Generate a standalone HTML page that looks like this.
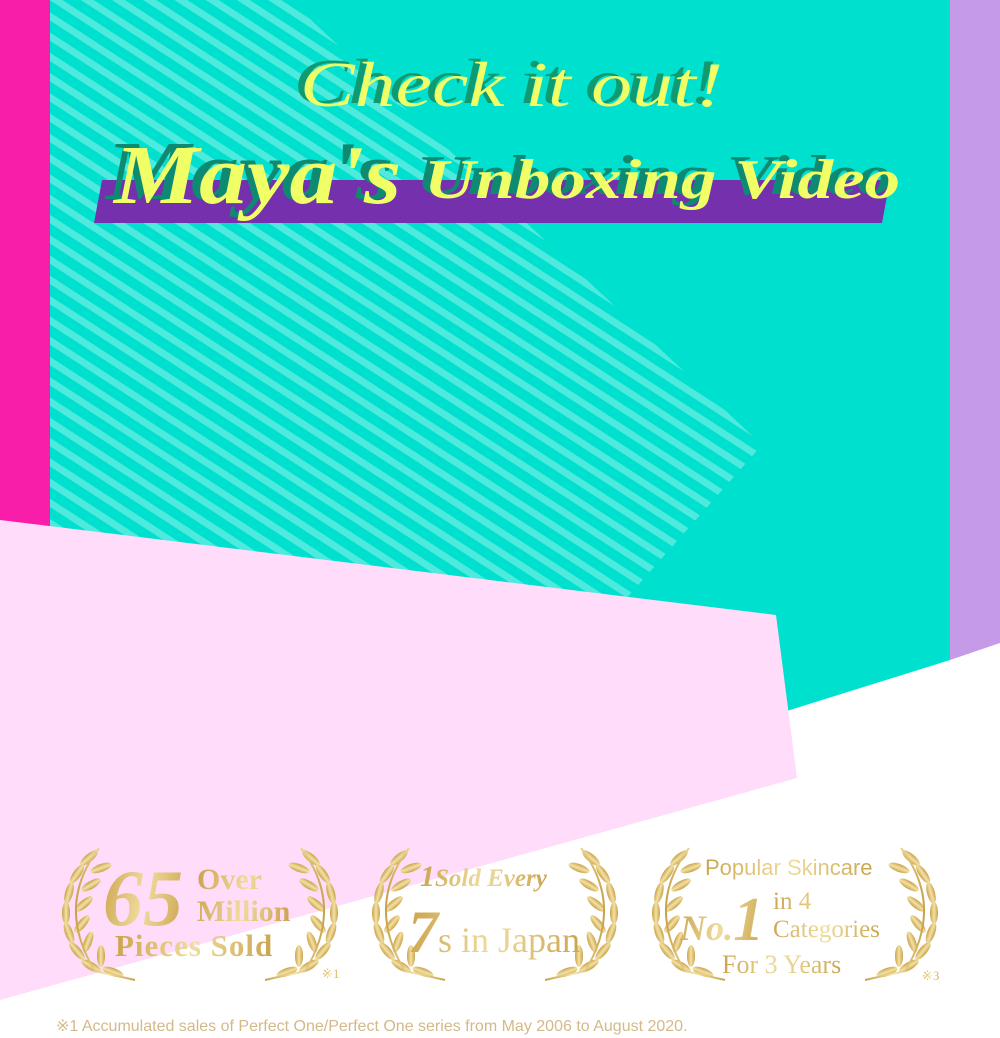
<!DOCTYPE html>
<html><head><meta charset="utf-8"><style>
body{margin:0;width:1000px;height:1038px;position:relative;overflow:hidden;background:#fff;font-family:"Liberation Serif",serif}
.a{position:absolute}
.gold{background:linear-gradient(100deg,#c9a24a,#f0dc9e 50%,#c9a24a);-webkit-background-clip:text;background-clip:text;color:transparent}
.t{position:absolute;font-style:italic;color:#f0ff66;white-space:nowrap;transform-origin:0 0}
</style></head><body>
<svg class="a" style="left:0;top:0" width="1000" height="1038">
<defs>
<pattern id="st" patternUnits="userSpaceOnUse" width="17" height="17" patternTransform="rotate(33)">
<rect width="17" height="17" fill="#00e0ce"/><rect width="17" height="7" fill="#4deadd"/></pattern>
<linearGradient id="g" x1="0" x2="1"><stop offset="0" stop-color="#c9a24a"/><stop offset=".5" stop-color="#f3e1a4"/><stop offset="1" stop-color="#c9a24a"/></linearGradient>
<g id="lf"><g fill="url(#g)">
<ellipse cx="0" cy="0" rx="4" ry="11" transform="translate(34,12) rotate(50)"/>
<ellipse cx="0" cy="0" rx="4" ry="11" transform="translate(22,28) rotate(35)"/>
<ellipse cx="0" cy="0" rx="4" ry="11" transform="translate(14,47) rotate(15)"/>
<ellipse cx="0" cy="0" rx="4" ry="11" transform="translate(11,67) rotate(0)"/>
<ellipse cx="0" cy="0" rx="4" ry="11" transform="translate(14,87) rotate(-20)"/>
<ellipse cx="0" cy="0" rx="4" ry="11" transform="translate(22,105) rotate(-40)"/>
<ellipse cx="0" cy="0" rx="4" ry="11" transform="translate(36,120) rotate(-60)"/>
<ellipse cx="0" cy="0" rx="4" ry="11" transform="translate(46,22) rotate(70)"/>
<ellipse cx="0" cy="0" rx="4" ry="11" transform="translate(36,39) rotate(60)"/>
<ellipse cx="0" cy="0" rx="4" ry="11" transform="translate(29,58) rotate(50)"/>
<ellipse cx="0" cy="0" rx="4" ry="11" transform="translate(27,78) rotate(40)"/>
<ellipse cx="0" cy="0" rx="4" ry="11" transform="translate(33,96) rotate(20)"/>
<ellipse cx="0" cy="0" rx="4" ry="11" transform="translate(46,110) rotate(0)"/>
<ellipse cx="0" cy="0" rx="4" ry="11" transform="translate(58,126) rotate(-70)"/>
</g><path d="M44,2 Q0,60 40,125 L80,134" stroke="url(#g)" stroke-width="2" fill="none"/></g>
</defs>
<rect x="0" y="0" width="50" height="526" fill="#f81eaa"/>
<polygon points="50,0 950,0 950,660 790,710 50,940" fill="#00e0ce"/>
<polygon points="50,0 290,0 762,445 625,600 50,530" fill="url(#st)"/>
<polygon points="950,0 1000,0 1000,643 950,660" fill="#c59be8"/>
<polygon points="0,520 776,615 797,778 0,1000" fill="#fedcfa"/>
<polygon points="102,180 890,180 882,223 94,223" fill="#7430ad"/>
<use href="#lf" x="55" y="846"/><use href="#lf" transform="translate(345,846) scale(-1,1)"/>
<use href="#lf" x="365" y="846"/><use href="#lf" transform="translate(625,846) scale(-1,1)"/>
<use href="#lf" x="645" y="846"/><use href="#lf" transform="translate(945,846) scale(-1,1)"/>
</svg>
<div class="t" style="left:300px;top:48px;font-size:64px;transform:scaleX(1.28);text-shadow:-5px -3px 0 #0f9a72">Check it out!</div>
<div class="t" style="left:114px;top:127px;font-size:84px;font-weight:bold;transform:scaleX(1.14);text-shadow:-7px -4px 0 #0f8a72">Maya's</div>
<div class="t" style="left:424px;top:148px;font-size:56px;font-weight:bold;transform:scaleX(1.27);text-shadow:-6px -4px 0 #0f8a72">Unboxing Video</div>

<div class="a gold" style="left:103px;top:854px;font-size:80px;font-style:italic;font-weight:bold">65</div>
<div class="a gold" style="left:197px;top:864px;font-size:30px;line-height:32px;font-weight:bold">Over<br>Million</div>
<div class="a gold" style="left:115px;top:928px;font-size:31px;font-weight:bold;letter-spacing:1px">Pieces Sold</div>
<div class="a gold" style="left:322px;top:966px;font-size:13px">※1</div>

<div class="a gold" style="left:420px;top:860px;font-size:30px;font-style:italic;font-weight:bold">1<span style="font-size:25px">Sold Every</span></div>
<div class="a gold" style="left:408px;top:898px;font-size:60px;font-style:italic;font-weight:bold">7<span style="font-size:36px;font-style:normal;font-weight:normal">s in Japan</span></div>

<div class="a gold" style="left:705px;top:855px;font-size:22px;font-family:'Liberation Sans',sans-serif">Popular Skincare</div>
<div class="a gold" style="left:680px;top:885px;font-size:36px;font-style:italic;font-weight:bold">No.<span style="font-size:62px">1</span></div>
<div class="a gold" style="left:773px;top:888px;font-size:25px;line-height:28px">in 4<br>Categories</div>
<div class="a gold" style="left:722px;top:950px;font-size:26px">For 3 Years</div>
<div class="a gold" style="left:922px;top:968px;font-size:13px">※3</div>

<div class="a" style="left:56px;top:1016px;font-size:16px;color:#d4b98a;font-family:'Liberation Sans',sans-serif">※1 Accumulated sales of Perfect One/Perfect One series from May 2006 to August 2020.</div>
</body></html>
